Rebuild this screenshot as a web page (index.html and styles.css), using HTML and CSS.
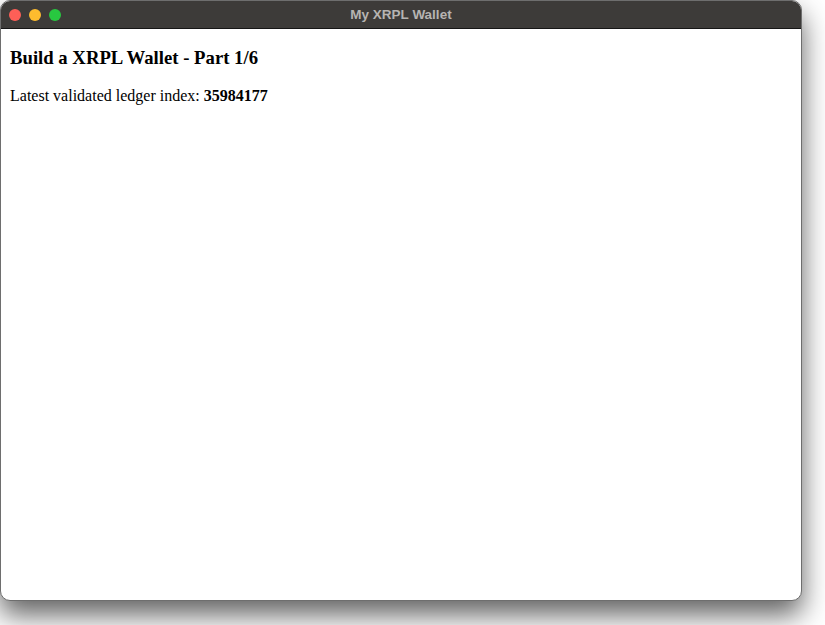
FILE: index.html
```html
<!DOCTYPE html>
<html>
<head>
<meta charset="utf-8">
<title>My XRPL Wallet</title>
<link rel="stylesheet" href="styles.css">
</head>
<body>
<div class="window">
  <div class="titlebar">
    <div class="lights">
      <span class="light red"></span>
      <span class="light yellow"></span>
      <span class="light green"></span>
    </div>
    <div class="title">My XRPL Wallet</div>
  </div>
  <div class="content">
    <h3 class="heading">Build a XRPL Wallet - Part 1/6</h3>
    <p class="ledger">Latest validated ledger index: <strong>35984177</strong></p>
  </div>
</div>
</body>
</html>
```
FILE: styles.css
```css
html, body {
  margin: 0;
  padding: 0;
  background: #ffffff;
}
body {
  width: 825px;
  height: 625px;
  overflow: hidden;
}
.window {
  width: 802px;
  height: 601px;
  box-sizing: border-box;
  border: 1px solid #6e6e6e;
  border-radius: 10px;
  overflow: hidden;
  background: #ffffff;
  box-shadow: 0 14px 28px rgba(0, 0, 0, 0.62);
  display: flex;
  flex-direction: column;
}
.titlebar {
  height: 28px;
  flex: none;
  background: #3d3b39;
  border-bottom: 1px solid #161616;
  box-sizing: border-box;
  position: relative;
  display: flex;
  align-items: center;
}
.lights {
  display: flex;
  gap: 8px;
  padding-left: 8px;
  margin-top: 1px;
}
.light {
  width: 12px;
  height: 12px;
  border-radius: 50%;
  display: block;
}
.red { background: #fe5f57; }
.yellow { background: #febc2e; }
.green { background: #28c840; }
.title {
  position: absolute;
  left: 0;
  right: 0;
  top: 0;
  bottom: 0;
  display: flex;
  align-items: center;
  justify-content: center;
  font-family: "Liberation Sans", Arial, sans-serif;
  font-weight: bold;
  font-size: 13.5px;
  color: #b6b4b2;
}
.content {
  flex: 1;
  padding: 0 9px;
  font-family: "Liberation Serif", "Times New Roman", serif;
  color: #000;
}
.heading {
  font-size: 18.72px;
  font-weight: bold;
  margin: 18px 0 18px;
}
.ledger {
  font-size: 16px;
  margin: 17px 0;
}
```
